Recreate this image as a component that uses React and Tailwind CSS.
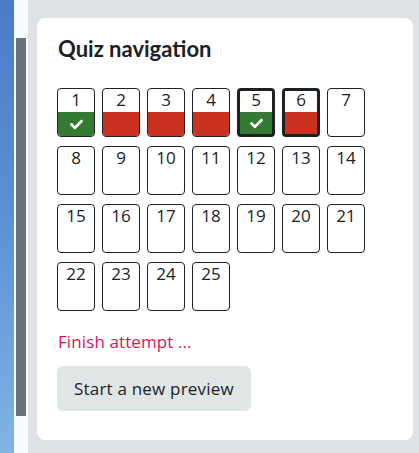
import React from "react";
import { FaCheck } from "react-icons/fa";

// state per page: "right" | "wrong" | null; current pages get the heavy border
const pages = Array.from({ length: 25 }, (_, i) => {
  const n = i + 1;
  let state = null;
  if (n === 1 || n === 5) state = "right";
  if (n === 2 || n === 3 || n === 4 || n === 6) state = "wrong";
  return { n, state, current: n === 5 || n === 6 };
});

const PageButton = ({ page }) => {
  return (
    <div
      className={
        "flex flex-col w-[38px] h-[49px] rounded-[4px] bg-white overflow-hidden border-[#1d2125] " +
        (page.current ? "border-[3px]" : "border")
      }
    >
      <div
        className={
          "flex-none h-[24px] flex justify-center items-start text-[17px] leading-[24px] text-[#1d2125] " +
          (page.current ? "-mt-[3px]" : "-mt-px")
        }
      >
        {page.n}
      </div>
      {page.state === "right" && (
        <div className="flex-1 bg-[#357a32] flex items-center justify-center text-white">
          <FaCheck size={13} />
        </div>
      )}
      {page.state === "wrong" && <div className="flex-1 bg-[#ca3120]" />}
    </div>
  );
};

export default function App() {
  return (
    <div
      className="flex w-[419px] h-[453px] bg-[#dee2e6] overflow-hidden"
      style={{ fontFamily: "'Open Sans', Lato, sans-serif" }}
    >
      <div className="flex-none w-[14px] h-full bg-gradient-to-b from-[#4a7cc6] via-[#5b93d6] to-[#80b4e3]" />
      <div className="flex-none w-[14px] h-full bg-[#f8f9fa] pl-[2px] pt-[38px]">
        <div className="w-[10px] h-[378px] bg-[#6a737b]" />
      </div>
      <div className="flex-none pl-[9px] pt-[18px]">
        <div className="w-[376px] h-[422px] rounded-[8px] bg-white pl-[20px] pt-[17px]">
          <h2
            className="text-[22px] leading-[28px] font-bold text-[#1d2125] pl-px"
            style={{ fontFamily: "Lato, sans-serif" }}
          >
            Quiz navigation
          </h2>
          <div className="mt-[25px] grid grid-cols-[repeat(7,38px)] gap-x-[7px] gap-y-[9px]">
            {pages.map((p) => (
              <PageButton key={p.n} page={p} />
            ))}
          </div>
          <div className="mt-[19px] text-[17px] leading-[24px] tracking-[0.1px] text-[#dc1457] pl-px">
            Finish attempt ...
          </div>
          <button className="mt-[12px] h-[45px] px-[17px] rounded-[6px] bg-[#e0e5e5] text-[17px] tracking-[0.2px] text-[#1d2125]">
            Start a new preview
          </button>
        </div>
      </div>
    </div>
  );
}
